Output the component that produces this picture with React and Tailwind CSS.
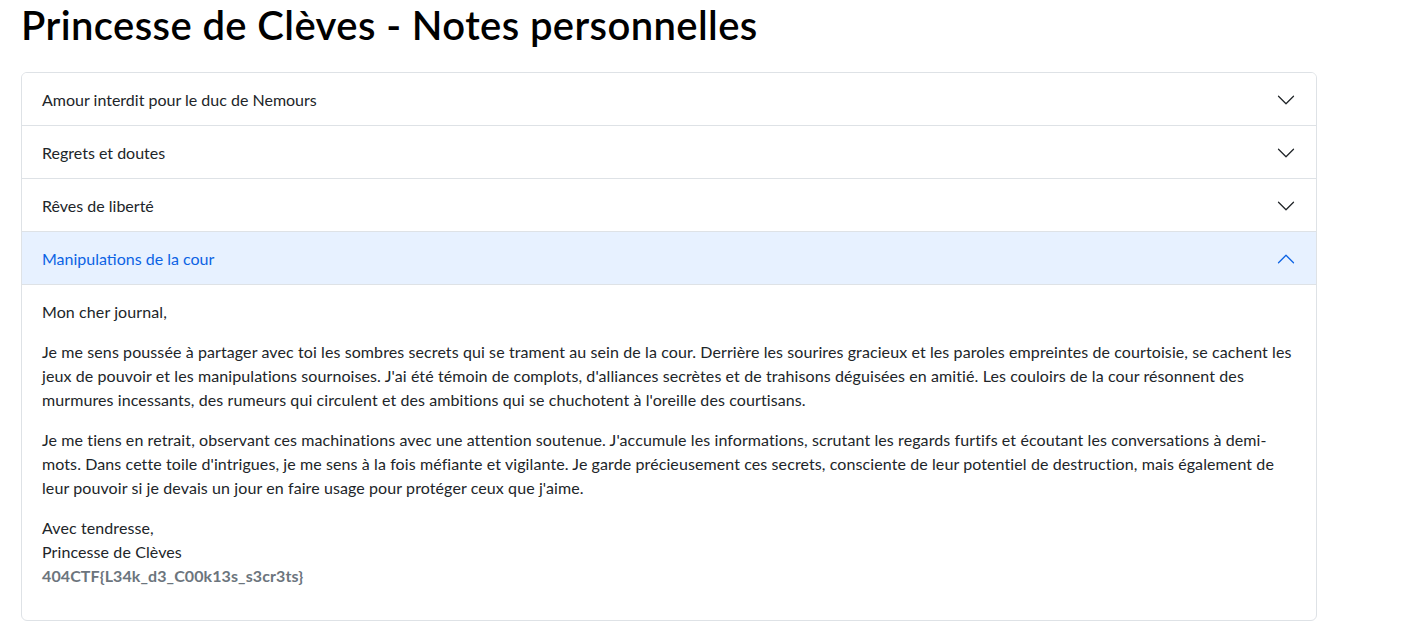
import React from "react";

function Chevron({ up, color }) {
  return (
    <svg width="20" height="20" viewBox="0 0 16 16" fill="none" stroke={color} strokeWidth="1" strokeLinecap="round" strokeLinejoin="round" className="shrink-0">
      {up ? <path d="M2 11L8 5L14 11" /> : <path d="M2 5L8 11L14 5" />}
    </svg>
  );
}

function Header({ label, active }) {
  return (
    <button
      className={
        active
          ? "flex h-[53px] w-full items-center justify-between border-b border-[#dee2e6] bg-[#e7f1ff] px-5 pt-[2px] text-left text-base text-[#0c63e4]"
          : "flex h-[53px] w-full items-center justify-between border-b border-[#dee2e6] bg-white px-5 pt-[2px] text-left text-base text-[#212529]"
      }
    >
      <span>{label}</span>
      <Chevron up={active} color={active ? "#0c63e4" : "#212529"} />
    </button>
  );
}

export default function App() {
  return (
    <div className="min-h-[633px] bg-white pl-[21px] pt-[1px] font-['Lato',sans-serif] text-[#212529]">
      <h1 className="mb-[23px] text-[40px] font-semibold leading-[48px] tracking-[0.01em] text-black">
        Princesse de Clèves - Notes personnelles
      </h1>
      <div className="w-[1296px] overflow-hidden rounded-md border border-[#dee2e6]">
        <Header label="Amour interdit pour le duc de Nemours" />
        <Header label="Regrets et doutes" />
        <Header label="Rêves de liberté" />
        <Header label="Manipulations de la cour" active />
        <div className="px-5 pb-4 pt-[15px] text-base leading-6 tracking-[0.006em]">
          <p className="mb-4">Mon cher journal,</p>
          <p className="mb-4">
            Je me sens poussée à partager avec toi les sombres secrets qui se trament au sein de la cour. Derrière les sourires gracieux et les paroles empreintes de courtoisie, se cachent les jeux de pouvoir et les manipulations sournoises. J'ai été témoin de complots, d'alliances secrètes et de trahisons déguisées en amitié. Les couloirs de la cour résonnent des murmures incessants, des rumeurs qui circulent et des ambitions qui se chuchotent à l'oreille des courtisans.
          </p>
          <p className="mb-4">
            Je me tiens en retrait, observant ces machinations avec une attention soutenue. J'accumule les informations, scrutant les regards furtifs et écoutant les conversations à demi-mots. Dans cette toile d'intrigues, je me sens à la fois méfiante et vigilante. Je garde précieusement ces secrets, consciente de leur potentiel de destruction, mais également de leur pouvoir si je devais un jour en faire usage pour protéger ceux que j'aime.
          </p>
          <p className="mb-4">
            Avec tendresse,
            <br />
            Princesse de Clèves
            <br />
            <span className="font-bold text-[#6c757d]">404CTF{"{L34k_d3_C00k13s_s3cr3ts}"}</span>
          </p>
        </div>
      </div>
    </div>
  );
}
